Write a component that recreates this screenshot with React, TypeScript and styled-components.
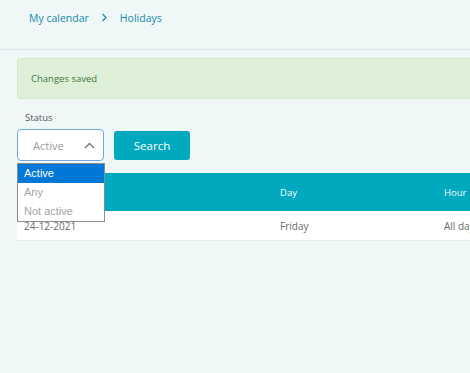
import styled, { createGlobalStyle } from "styled-components";

const GlobalStyle = createGlobalStyle`
  html, body {
    margin: 0;
    padding: 0;
    background: #f0f7f7;
    overflow: hidden;
  }
  body {
    font-family: "Open Sans", "Liberation Sans", sans-serif;
  }
`;

const Page = styled.div`
  width: 470px;
  height: 373px;
  overflow: hidden;
  background: #f0f7f7;
`;

const Breadcrumb = styled.nav`
  display: flex;
  align-items: center;
  gap: 12px;
  height: 35px;
  padding-left: 29px;
  box-sizing: border-box;
  font-size: 10.5px;
  color: #1689ab;
`;

const Crumb = styled.span`
  line-height: 14px;
`;

const Divider = styled.div`
  margin-top: 14px;
  height: 1px;
  background: #dfe6e7;
`;

const Content = styled.div`
  padding: 8px 0 0 17px;
  width: 640px;
`;

const Alert = styled.div`
  height: 41px;
  box-sizing: border-box;
  background: #dff0d8;
  border: 1px solid #d2e8c8;
  border-radius: 3px;
  padding-left: 13px;
  display: flex;
  align-items: center;
  font-size: 9.5px;
  color: #3c763d;
`;

const Label = styled.div`
  margin: 12px 0 0 8px;
  font-size: 9.5px;
  color: #555;
  line-height: 13px;
`;

const Filters = styled.div`
  margin-top: 5px;
  display: flex;
  align-items: center;
  gap: 10px;
  position: relative;
`;

const Select = styled.div`
  position: relative;
  width: 87px;
  height: 32px;
  box-sizing: border-box;
  background: #fff;
  border: 1px solid #6fa8dc;
  border-radius: 4px;
  display: flex;
  align-items: center;
  justify-content: space-between;
  padding: 0 8px 0 15px;
  font-size: 11px;
  color: #9a9a9a;
`;

const Button = styled.button`
  width: 76px;
  height: 29px;
  border: none;
  border-radius: 3px;
  background: #00a9bd;
  color: #fff;
  font-family: "Open Sans", "Liberation Sans", sans-serif;
  font-size: 11.5px;
  padding: 0;
`;

const Menu = styled.ul`
  position: absolute;
  top: 33px;
  left: -1px;
  width: 88px;
  margin: 0;
  padding: 0;
  list-style: none;
  background: #fff;
  border: 1px solid #8c8c8c;
  box-sizing: border-box;
  z-index: 2;
  font-family: "Liberation Sans", Arial, sans-serif;
  font-size: 11px;
`;

const Option = styled.li<{ $active?: boolean }>`
  height: 19px;
  line-height: 19px;
  padding-left: 6px;
  background: ${(p) => (p.$active ? "#0078d7" : "#fff")};
  color: ${(p) => (p.$active ? "#fff" : "#a3a3a3")};
`;

const Table = styled.div`
  margin-top: 12px;
`;

const HeadRow = styled.div`
  display: grid;
  grid-template-columns: 256px 164px 1fr;
  height: 38px;
  align-items: center;
  background: #00a9bd;
  color: #fff;
  font-size: 9.5px;
`;

const Row = styled.div`
  display: grid;
  grid-template-columns: 256px 164px 1fr;
  height: 29px;
  align-items: center;
  background: #fff;
  border-bottom: 1px solid #e3ebeb;
  color: #6b6b6b;
  font-size: 10px;
`;

const Cell = styled.div`
  padding-left: 7px;
`;

export default function App() {
  return (
    <Page>
      <GlobalStyle />
      <Breadcrumb>
        <Crumb>My calendar</Crumb>
        <svg width="7" height="9" viewBox="0 0 7 9">
          <path d="M1.5 1 L5 4.5 L1.5 8" fill="none" stroke="#1689ab" strokeWidth="1.2" />
        </svg>
        <Crumb>Holidays</Crumb>
      </Breadcrumb>
      <Divider />
      <Content>
        <Alert>Changes saved</Alert>
        <Label>Status</Label>
        <Filters>
          <Select>
            <span>Active</span>
            <svg width="11" height="7" viewBox="0 0 11 7">
              <path d="M1 6 L5.5 1.5 L10 6" fill="none" stroke="#777" strokeWidth="1.4" />
            </svg>
            <Menu>
              <Option $active>Active</Option>
              <Option>Any</Option>
              <Option>Not active</Option>
            </Menu>
          </Select>
          <Button>Search</Button>
        </Filters>
        <Table>
          <HeadRow>
            <Cell />
            <Cell>Day</Cell>
            <Cell>Hour</Cell>
          </HeadRow>
          <Row>
            <Cell>24-12-2021</Cell>
            <Cell>Friday</Cell>
            <Cell>All day</Cell>
          </Row>
        </Table>
      </Content>
    </Page>
  );
}
